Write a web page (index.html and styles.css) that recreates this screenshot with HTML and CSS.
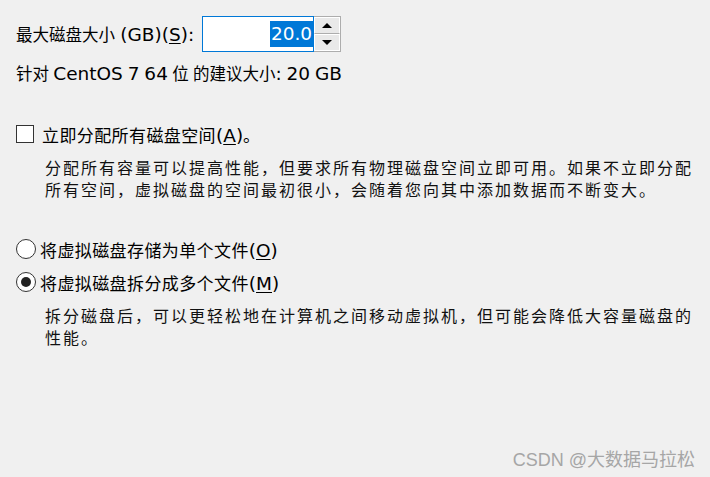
FILE: index.html
```html
<!DOCTYPE html>
<html lang="zh-CN">
<head>
  <meta charset="UTF-8">
  <title>指定磁盘容量</title>
  <link rel="stylesheet" href="styles.css">
</head>
<body>
  <div class="page">
    <div class="size-row">
      <label for="size">最大磁盘大小 <span class="lat">(GB)(<u>S</u>):</span></label>
      <div class="spin">
        <div class="spin-field" id="size"><span class="sel">20.0</span></div>
        <div class="spin-btns">
          <div class="spin-btn"><span class="arrow up"></span></div>
          <div class="spin-btn"><span class="arrow down"></span></div>
        </div>
      </div>
    </div>
    <p class="hint">针对 <span class="lat">CentOS 7 64</span> 位 的建议大小<span class="lat">: 20 GB</span></p>

    <div class="option check-row">
      <span class="checkbox"></span>
      <span class="text">立即分配所有磁盘空间<span class="lat">(<u>A</u>)</span>。</span>
    </div>
    <p class="desc">分配所有容量可以提高性能，但要求所有物理磁盘空间立即可用。如果不立即分配<br>所有空间，虚拟磁盘的空间最初很小，会随着您向其中添加数据而不断变大。</p>

    <div class="option radio-row first">
      <span class="radio"></span>
      <span class="text">将虚拟磁盘存储为单个文件<span class="lat">(<u>O</u>)</span></span>
    </div>
    <div class="option radio-row">
      <span class="radio on"></span>
      <span class="text">将虚拟磁盘拆分成多个文件<span class="lat">(<u>M</u>)</span></span>
    </div>
    <p class="desc">拆分磁盘后，可以更轻松地在计算机之间移动虚拟机，但可能会降低大容量磁盘的<br>性能。</p>
  </div>
  <div class="watermark">CSDN @大数据马拉松</div>
</body>
</html>
```

FILE: styles.css
```css
body { margin: 0; background: #f0f0f0; color: #000; font-family: "DejaVu Sans", "Noto Sans CJK SC", sans-serif; font-size: 16.5px; height: 477px; position: relative; overflow: hidden; }
.page { padding: 16px 0 0 16px; }
u { text-underline-offset: 2px; }
.lat { font-size: 18.5px; letter-spacing: 0; }

.size-row { display: flex; align-items: center; height: 36px; }
.spin { display: flex; margin-left: 8px; height: 36px; }
.spin-field { width: 110px; border: 1px solid #0078d7; background: #fff; display: flex; align-items: center; justify-content: flex-end; font-size: 18.5px; }
.sel { background: #0078d7; color: #fff; padding: 0 1px; line-height: 26px; }
.spin-btns { width: 26px; border: 1px solid #adadad; border-left: none; display: flex; flex-direction: column; }
.spin-btn { flex: 1; background: #e9e9e9; border: 1px solid #fff; border-bottom-color: #adadad; display: flex; align-items: center; justify-content: center; }
.spin-btn + .spin-btn { border-bottom-color: #fff; }
.arrow { width: 0; height: 0; border-left: 5px solid transparent; border-right: 5px solid transparent; }
.arrow.up { border-bottom: 5px solid #000; }
.arrow.down { border-top: 5px solid #000; }

.hint { margin: 11px 0 0; height: 22px; line-height: 22px; word-spacing: -1px; }

.option { display: flex; align-items: center; gap: 8px; height: 22px; }
.option .text { font-size: 17px; letter-spacing: 0.4px; }
.check-row { margin-top: 38px; }
.checkbox { width: 16px; height: 16px; border: 1px solid #333; background: #fff; }
.radio { width: 18px; height: 18px; border: 1px solid #333; border-radius: 50%; background: #fff; display: flex; align-items: center; justify-content: center; margin-right: -4px; }
.radio.on::after { content: ""; width: 10px; height: 10px; border-radius: 50%; background: #222; }
.radio-row.first { margin-top: 36px; }
.radio-row + .radio-row { margin-top: 11px; }

.desc { margin: 13px 0 0 29px; font-size: 16px; line-height: 22px; letter-spacing: 2px; color: #111; }

.watermark { position: absolute; right: 15px; bottom: 6px; color: #a6a6a6; font-family: "Liberation Sans", "Noto Sans CJK SC", sans-serif; font-size: 18px; }
```
